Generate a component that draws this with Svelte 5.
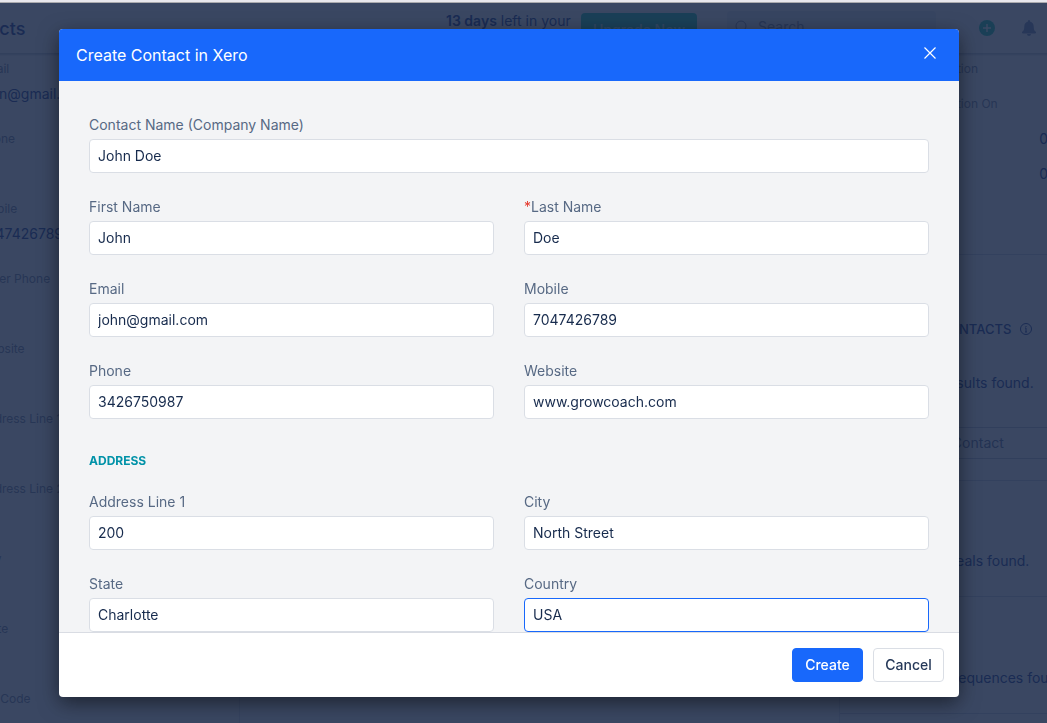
<script lang="ts">
  interface Field {
    id: string;
    label: string;
    value: string;
    required?: boolean;
    wide?: boolean;
    active?: boolean;
  }

  let contactFields: Field[] = $state([
    { id: 'contact-name', label: 'Contact Name (Company Name)', value: 'John Doe', wide: true },
    { id: 'first-name', label: 'First Name', value: 'John' },
    { id: 'last-name', label: 'Last Name', value: 'Doe', required: true },
    { id: 'email', label: 'Email', value: 'john@gmail.com' },
    { id: 'mobile', label: 'Mobile', value: '7047426789' },
    { id: 'phone', label: 'Phone', value: '3426750987' },
    { id: 'website', label: 'Website', value: 'www.growcoach.com' }
  ]);

  let addressFields: Field[] = $state([
    { id: 'address-1', label: 'Address Line 1', value: '200' },
    { id: 'city', label: 'City', value: 'North Street' },
    { id: 'state', label: 'State', value: 'Charlotte' },
    { id: 'country', label: 'Country', value: 'USA', active: true }
  ]);

  const details = [
    { label: 'Email', value: 'john@gmail.com' },
    { label: 'Phone', value: '' },
    { label: 'Mobile', value: '7047426789' },
    { label: 'Other Phone', value: '' },
    { label: 'Website', value: '' },
    { label: 'Address Line 1', value: '' },
    { label: 'Address Line 2', value: '' },
    { label: 'City', value: '' },
    { label: 'State', value: '' },
    { label: 'Zip Code', value: '' }
  ];

  const activity = [
    { label: 'Last Communication', value: '' },
    { label: 'Last Communication On', value: '' },
    { label: 'Created', value: '04 Jul 24' },
    { label: 'Updated', value: '04 Jul 24' }
  ];
</script>

{#snippet fieldGrid(fields: Field[])}
  <div class="field-grid">
    {#each fields as field (field.id)}
      <div class="field" class:wide={field.wide}>
        <label for={field.id}>
          {#if field.required}<span class="required">*</span>{/if}{field.label}
        </label>
        <input id={field.id} class:active={field.active} type="text" bind:value={field.value} />
      </div>
    {/each}
  </div>
{/snippet}

<div class="page">
  <div class="window-edge"></div>
  <div class="workspace" inert>
    <header class="topbar">
      <h1>Contacts</h1>
      <div class="topbar-tools">
        <p class="trial"><strong>13 days</strong> left in your<br />trial</p>
        <button class="upgrade" type="button">Upgrade Now</button>
        <div class="search">
          <svg width="14" height="14" viewBox="0 0 14 14" fill="none" stroke="currentColor">
            <circle cx="6" cy="6" r="5" />
            <path d="M9.5 9.5 13 13" />
          </svg>
          <input type="text" placeholder="Search" aria-label="Search" />
        </div>
        <button class="icon-button add" type="button" aria-label="Add">
          <svg width="16" height="16" viewBox="0 0 16 16">
            <circle cx="8" cy="8" r="8" fill="#5fd8c4" />
            <path d="M8 4v8M4 8h8" stroke="#ffffff" stroke-width="1.4" />
          </svg>
        </button>
        <button class="icon-button" type="button" aria-label="Notifications">
          <svg width="16" height="16" viewBox="0 0 16 16" fill="currentColor">
            <path d="M8 0a1 1 0 0 0-1 1v.6A5 5 0 0 0 3.3 6.2C3.3 9.7 2.4 10.7 1.4 11.6.5 12.5 1 13.5 2 13.5h12c1 0 1.500-1 .6-1.900-1-.9-1.900-1.900-1.900-5.400A5 5 0 0 0 9 1.600V1a1 1 0 0 0-1-1ZM6 14a2 2 0 0 0 4 0Z" />
          </svg>
        </button>
      </div>
    </header>

    <div class="columns">
      <aside class="details">
        {#each details as item}
          <div class="detail">
            <span class="caption">{item.label}</span>
            <span class="value">{item.value}</span>
          </div>
        {/each}
      </aside>
      <main></main>
      <aside class="related">
        <section class="activity">
          {#each activity as item}
            <div class="activity-row">
              <span class="caption">{item.label}</span>
              <span class="value">{item.value}</span>
            </div>
          {/each}
        </section>
        <section class="contacts">
          <h2>
            RELATED CONTACTS
            <svg width="12" height="12" viewBox="0 0 12 12" fill="none" stroke="currentColor">
              <circle cx="6" cy="6" r="5.5" />
              <path d="M6 5v4M6 3v1M5 5h1M5 9h2" />
            </svg>
          </h2>
          <p>No results found.</p>
          <button class="associate" type="button">Add Contact</button>
        </section>
        <section class="deals"><p>No deals found.</p></section>
        <section class="sequences"><p>No active sequences found.</p></section>
      </aside>
    </div>
  </div>
</div>

<div class="backdrop">
  <div class="dialog" role="dialog" aria-modal="true" aria-labelledby="dialog-title">
    <header class="dialog-header">
      <h2 id="dialog-title">Create Contact in Xero</h2>
      <button class="icon-button" type="button" aria-label="Close">
        <svg width="12" height="12" viewBox="0 0 12 12" fill="none" stroke="currentColor" stroke-width="1.2">
          <path d="M.5.5l11 11M11.5.5l-11 11" />
        </svg>
      </button>
    </header>
    <form class="dialog-body" id="contact-form">
      {@render fieldGrid(contactFields)}
      <h3>ADDRESS</h3>
      {@render fieldGrid(addressFields)}
    </form>
    <footer class="dialog-footer">
      <button class="btn primary" type="button">Create</button>
      <button class="btn" type="button">Cancel</button>
    </footer>
  </div>
</div>

<style>
  :global(body) {
    overflow: hidden;
    font-family: Inter, 'Liberation Sans', sans-serif;
    font-size: 14px;
    line-height: 20px;
    color: #172b4d;
  }

  h1,
  h2,
  h3,
  p {
    margin: 0;
  }

  button,
  input {
    font: inherit;
    box-sizing: border-box;
  }

  .page {
    height: 100vh;
    overflow: hidden;
    background: #ffffff;
  }

  .window-edge {
    height: 2px;
    background: #e9e8ed;
    border-bottom: 1px solid #a8a7aa;
  }

  /* the record view is wider than the window and is cut off on both sides */
  .workspace {
    margin: 0 -72px 0 -52px;
    color: #5f75b4;
  }

  .topbar {
    display: flex;
    justify-content: space-between;
    height: 50px;
    border-bottom: 1px solid #d5d9e2;
    box-shadow: 0 1px 2px #d5d9e2;
  }

  .topbar h1 {
    font-size: 18px;
    font-weight: 500;
    line-height: 52px;
  }

  .topbar-tools {
    display: flex;
    align-items: flex-start;
    padding: 8px 78px 0 0;
  }

  .trial {
    width: 125px;
    margin-right: 10px;
  }

  .trial strong {
    font-weight: 600;
  }

  .upgrade {
    width: 116px;
    height: 34px;
    margin: 2px 30px 0 0;
    padding: 0;
    border: 0;
    border-radius: 4px;
    background: #60d8c8;
    color: #c8f4f4;
    font-weight: 500;
  }

  .search {
    display: flex;
    align-items: center;
    gap: 9px;
    box-sizing: border-box;
    width: 209px;
    height: 32px;
    padding: 0 8px;
    border-radius: 4px;
    background: #f0f2f8;
    color: #a0a9bf;
  }

  .search input {
    min-width: 0;
    flex: 1;
    padding: 0;
    border: 0;
    background: none;
  }

  .search input::placeholder {
    color: #a0a9bf;
  }

  .icon-button {
    display: flex;
    padding: 4px;
    border: 0;
    background: none;
    color: inherit;
  }

  .topbar .icon-button {
    margin-top: 5px;
    color: #a0b0cc;
  }

  .topbar .add {
    margin: 5px 18px 0 39px;
  }

  .columns {
    display: flex;
  }

  main {
    flex: 1;
  }

  .details {
    box-sizing: border-box;
    width: 292px;
    padding: 5px 31px 0;
    border-right: 1px solid #e8ebf2;
  }

  .detail {
    display: flex;
    flex-direction: column;
    gap: 5px;
    height: 70px;
  }

  .caption {
    font-size: 12px;
    color: #a0a9bd;
  }

  .related {
    box-sizing: border-box;
    width: 280px;
    border-left: 1px solid #e8ebf2;
  }

  .related section {
    box-sizing: border-box;
    border-bottom: 1px solid #dce0e9;
    text-align: center;
  }

  .related p {
    padding-right: 5px;
  }

  .activity {
    height: 201px;
    padding: 5px 17px 0 22px;
  }

  .activity-row {
    display: flex;
    justify-content: space-between;
    height: 35px;
  }

  .contacts {
    height: 226px;
    padding-top: 64px;
  }

  .related h2 {
    display: flex;
    align-items: center;
    justify-content: center;
    gap: 9px;
    margin-bottom: 34px;
    padding-right: 48px;
    font-size: 13px;
    font-weight: 500;
    line-height: 20px;
  }

  .associate {
    display: block;
    width: 100%;
    height: 32px;
    margin-top: 34px;
    padding: 0 34px 0 0;
    border: solid #cfd5e2;
    border-width: 1px 0;
    background: none;
    color: #8d99b5;
  }

  .deals {
    height: 116px;
    padding-top: 70px;
  }

  .sequences {
    height: 117px;
    padding-top: 71px;
  }

  .backdrop {
    position: fixed;
    inset: 3px 0 0;
    padding: 26px 55px 26px 26px;
    background: rgba(9, 25, 59, 0.8);
  }

  .dialog {
    display: flex;
    flex-direction: column;
    width: 100%;
    max-width: 900px;
    max-height: 100%;
    margin: 0 auto;
    overflow: hidden;
    border-radius: 4px;
    background: #ffffff;
    box-shadow: 0 6px 20px rgba(0, 0, 0, 0.5);
  }

  .dialog-header {
    display: flex;
    align-items: center;
    justify-content: space-between;
    height: 52px;
    padding: 0 19px 0 17px;
    background: #1868fb;
    color: #ffffff;
  }

  .dialog-header h2 {
    font-size: 16px;
    font-weight: 400;
    line-height: 24px;
  }

  .dialog-header .icon-button {
    margin-bottom: 4px;
  }

  .dialog-body {
    min-height: 0;
    padding: 34px 30px 0;
    background: #f3f4f6;
  }

  .field-grid {
    display: grid;
    grid-template-columns: 1fr 1fr;
    gap: 24px 30px;
  }

  .field {
    display: flex;
    flex-direction: column;
    gap: 4px;
    min-width: 0;
  }

  .wide {
    grid-column: 1 / -1;
  }

  .field label {
    color: #576984;
  }

  .required {
    color: #e5372b;
  }

  .field input {
    width: 100%;
    height: 34px;
    padding: 0 8px 2px;
    border: 1px solid #dadee5;
    border-radius: 4px;
    background: #ffffff;
    color: #172b4d;
    outline: none;
  }

  .field input.active,
  .field input:focus {
    border-color: #1868fb;
  }

  .dialog-body h3 {
    margin: 32px 0 21px;
    font-size: 12px;
    font-weight: 700;
    line-height: 20px;
    color: #0092a8;
  }

  .dialog-footer {
    display: flex;
    justify-content: flex-end;
    gap: 10px;
    padding: 15px;
    border-top: 1px solid #d9dce3;
  }

  .btn {
    min-width: 71px;
    height: 34px;
    padding: 0 11px;
    border: 1px solid #dadee5;
    border-radius: 4px;
    background: #ffffff;
    color: #253858;
    font-weight: 500;
  }

  .primary {
    border-color: #1868fb;
    background: #1868fb;
    color: #ffffff;
  }
</style>
